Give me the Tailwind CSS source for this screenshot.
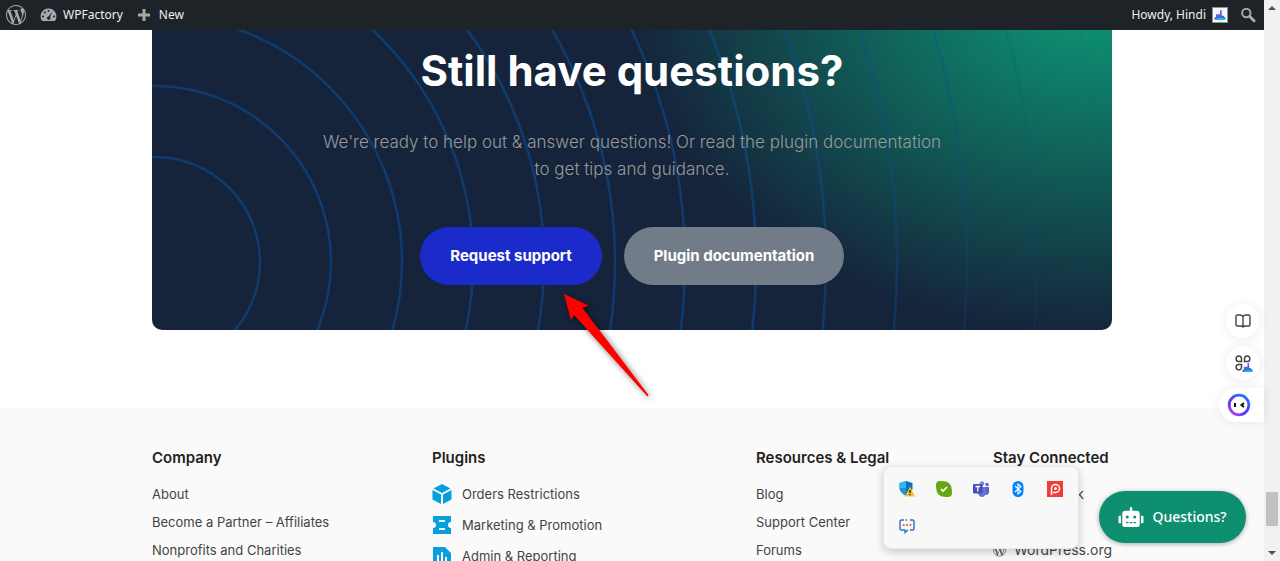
<!DOCTYPE html>
<html lang="en">
<head>
    <meta charset="UTF-8">
    <meta name="viewport" content="width=device-width, initial-scale=1.0">
    <title>WPFactory</title>
    <script src="https://cdn.jsdelivr.net/npm/@tailwindcss/browser@4"></script>
</head>
<body class="relative flex h-screen overflow-hidden bg-white font-['Inter',sans-serif]">
    <!-- Shared symbols -->
    <svg class="hidden">
        <symbol id="wordpress" viewBox="0 0 24 24">
            <path d="M21.469 6.825c.84 1.537 1.318 3.3 1.318 5.175 0 3.979-2.156 7.456-5.363 9.325l3.295-9.527c.615-1.54.82-2.771.82-3.864 0-.405-.026-.78-.07-1.11m-7.981.105c.647-.03 1.232-.105 1.232-.105.582-.075.514-.93-.067-.899 0 0-1.755.135-2.88.135-1.064 0-2.85-.15-2.85-.15-.585-.03-.661.855-.075.885 0 0 .54.061 1.125.09l1.68 4.605-2.37 7.08L5.354 6.9c.649-.03 1.234-.1 1.234-.1.585-.075.516-.93-.065-.896 0 0-1.746.138-2.874.138-.2 0-.438-.008-.69-.015C4.911 3.15 8.235 1.215 12 1.215c2.809 0 5.365 1.072 7.286 2.833-.046-.003-.091-.009-.141-.009-1.06 0-1.812.923-1.812 1.914 0 .89.513 1.643 1.06 2.531.411.72.89 1.643.89 2.977 0 .915-.354 1.994-.821 3.479l-1.075 3.585-3.9-11.61.001.014zM12 22.784c-1.059 0-2.081-.153-3.048-.437l3.237-9.406 3.315 9.087c.024.053.05.101.078.149-1.12.393-2.325.609-3.582.609M1.211 12c0-1.564.336-3.05.935-4.39L7.29 21.709C3.694 19.96 1.212 16.271 1.211 12M12 0C5.385 0 0 5.385 0 12s5.385 12 12 12 12-5.385 12-12S18.615 0 12 0"/>
        </symbol>
        <symbol id="avatar" viewBox="0 0 16 16">
            <path d="M3.500 11V7.500q1-1.500 1.800 0 1-1.500 1.800 0L8 7V3q1-1.500 2 0v5l2 2v2H4Z" fill="#7456dc"/>
            <path d="M1.500 12q1.500-3 4-1.500 4 1 6-2l2.500 2.500q1 1.500-1 2.500H3q-1.500 0-1.500-1.500Z" fill="#2f62d9"/>
            <path d="M2 12.500q5-2 12-1v1.500q-6 2-12-.5Z" fill="#19c0e8"/>
        </symbol>
    </svg>

    <div class="relative flex min-w-0 flex-1 flex-col">
        <!-- Admin bar -->
        <header class="flex h-[30px] shrink-0 items-center justify-between bg-[#1d2327] pr-2 pl-1.5 font-['Noto_Sans','Open_Sans',sans-serif] text-xs text-[#f0f0f1]">
            <nav class="flex items-center gap-[14px]">
                <a href="#" aria-label="WordPress"><svg class="size-5 fill-[#a7aaad]"><use href="#wordpress"/></svg></a>
                <a href="#" class="flex items-center gap-1.5">
                    <svg class="h-4 w-[17px] fill-[#a7aaad]" viewBox="0 0 16 16"><path fill-rule="evenodd" d="M8 1.500a7.900 7.900 0 0 0-6.300 12.600h12.600A7.900 7.900 0 0 0 8 1.500ZM8 3a1 1 0 1 1 0 2 1 1 0 0 1 0-2ZM4.300 4.500a1 1 0 1 1 0 2 1 1 0 0 1 0-2Zm-1.800 4a1 1 0 1 1 0 2 1 1 0 0 1 0-2Zm11 0a1 1 0 1 1 0 2 1 1 0 0 1 0-2ZM11.800 4.500 9.500 10a1.700 1.700 0 1 1-1.500-.6Z"/></svg>
                    WPFactory
                </a>
                <a href="#" class="flex items-center gap-2">
                    <svg class="size-[14px] stroke-[#a7aaad]" viewBox="0 0 14 14" stroke-width="3"><path d="M7 1v12M1 7h12"/></svg>
                    New
                </a>
            </nav>
            <div class="flex items-center gap-3">
                <a href="#" class="flex items-center gap-1.5">Howdy, Hindi
                    <svg class="size-4 border border-[#8c8f94] bg-[#f6f7f7]"><use href="#avatar"/></svg>
                </a>
                <button aria-label="Search"><svg class="size-4 fill-none stroke-[#a7aaad]" viewBox="0 0 16 16"><circle cx="6.300" cy="6" r="4.200" stroke-width="2"/><path d="m9.800 9.500 4.200 4.200" stroke-width="3" stroke-linecap="round"/></svg></button>
            </div>
        </header>

        <main class="mx-auto w-full max-w-[960px]">
            <section class="relative overflow-hidden rounded-b-[10px] bg-[#15243b] bg-[radial-gradient(472px_350px_at_calc(100%-12px)_-45px,#0c9d78,#15243b)] pb-[45px] text-center">
                <!-- Rings -->
                <svg class="absolute inset-0 h-full w-full fill-none stroke-[#0b4c8f]/60" stroke-width="2.500">
                    <defs>
                        <linearGradient id="fade"><stop offset=".65" stop-color="#fff"/><stop offset="1" stop-color="#fff" stop-opacity="0"/></linearGradient>
                        <mask id="ringMask" maskUnits="userSpaceOnUse" x="0" y="0" width="100%" height="100%"><rect width="100%" height="100%" fill="url(#fade)" stroke="none"/></mask>
                    </defs>
                    <g mask="url(#ringMask)">
                        <circle cx="3" cy="232" r="105"/>
                        <circle cx="3" cy="232" r="176"/>
                        <circle cx="3" cy="232" r="247"/>
                        <circle cx="3" cy="232" r="318"/>
                        <circle cx="3" cy="232" r="389"/>
                        <circle cx="3" cy="232" r="460"/>
                        <circle cx="3" cy="232" r="530"/>
                        <circle cx="3" cy="232" r="601"/>
                        <circle cx="3" cy="232" r="671"/>
                        <circle cx="3" cy="232" r="742"/>
                        <circle cx="3" cy="232" r="812"/>
                        <circle cx="3" cy="232" r="882"/>
                        <circle cx="3" cy="232" r="953"/>
                    </g>
                </svg>
                <div class="relative flex flex-col items-center">
                    <h2 class="pt-3 text-[42px] leading-[58px] font-bold text-white">Still have questions?</h2>
                    <p class="mt-[29px] max-w-[660px] text-[17px] leading-[27px] font-light text-[#999]">We're ready to help out &amp; answer questions! Or read the plugin documentation<br>to get tips and guidance.</p>
                    <div class="mt-11 flex gap-[22px] text-[15px] font-bold text-white">
                        <a href="#" class="flex h-[58px] w-[182px] items-center justify-center rounded-full bg-[#1b2bcb]">Request support</a>
                        <a href="#" class="flex h-[58px] w-[220px] items-center justify-center rounded-full bg-[#727c88]">Plugin documentation</a>
                    </div>
                </div>
            </section>
        </main>

        <footer class="mt-[78px] flex-1 bg-[#fafafa] text-[#444]">
            <div class="mx-auto flex max-w-[960px] justify-between pt-10 text-[13px] leading-5 whitespace-nowrap">
                <nav class="w-[176px]">
                    <h3 class="mb-4 text-[15px] font-semibold text-[#222]">Company</h3>
                    <ul class="flex flex-col gap-2">
                        <li><a href="#">About</a></li>
                        <li><a href="#">Become a Partner – Affiliates</a></li>
                        <li><a href="#">Nonprofits and Charities</a></li>
                    </ul>
                </nav>
                <nav class="w-[220px]">
                    <h3 class="mb-4 text-[15px] font-semibold text-[#222]">Plugins</h3>
                    <ul class="flex flex-col gap-[11px]">
                        <li><a href="#" class="flex items-center gap-2.5">
                            <svg class="size-5 fill-[#089fdf]" viewBox="0 0 20 20"><path d="m10 0 8.500 4.500L10 9 1.500 4.500ZM.5 6 9 10.500V20L.5 15.500ZM19.500 6 11 10.500V20l8.500-4.500Z"/></svg>Orders Restrictions</a></li>
                        <li><a href="#" class="flex items-center gap-2.5">
                            <svg class="size-5 fill-[#089fdf]" viewBox="0 0 20 20"><path fill-rule="evenodd" d="M1 1h18v6a3 3 0 0 0 0 6v6H1v-6a3 3 0 0 0 0-6ZM7 5v2h6V5ZM7 13v2h6v-2Z"/></svg>Marketing &amp; Promotion</a></li>
                        <li><a href="#" class="flex items-center gap-2.5">
                            <svg class="size-5 fill-[#089fdf]" viewBox="0 0 20 20"><path fill-rule="evenodd" d="M1 1h12l6 6v12H1ZM5 9v7h2V9ZM9 6v10h2V6ZM13 11v5h2v-5Z"/></svg>Admin &amp; Reporting</a></li>
                    </ul>
                </nav>
                <nav class="w-[133px]">
                    <h3 class="mb-4 text-[15px] font-semibold text-[#222]">Resources &amp; Legal</h3>
                    <ul class="flex flex-col gap-2">
                        <li><a href="#">Blog</a></li>
                        <li><a href="#">Support Center</a></li>
                        <li><a href="#">Forums</a></li>
                    </ul>
                </nav>
                <nav class="w-[119px]">
                    <h3 class="mb-4 text-[15px] font-semibold text-[#222]">Stay Connected</h3>
                    <ul class="flex flex-col gap-2 text-sm leading-5">
                        <li class="pl-[26px]"><a href="#">Facebook</a></li>
                        <li class="pl-[26px]"><a href="#">Twitter</a></li>
                        <li><a href="#" class="flex items-center gap-2"><svg class="size-[14px] fill-[#666]"><use href="#wordpress"/></svg>WordPress.org</a></li>
                    </ul>
                </nav>
            </div>
        </footer>

        <!-- Side tools -->
        <div class="absolute top-[304px] right-0 flex flex-col items-end gap-2">
            <button aria-label="Read" class="mr-1 grid size-[34px] place-items-center rounded-full bg-white shadow-[0_1px_12px_#00000015]">
                <svg class="size-4 fill-none stroke-[#444]" viewBox="0 0 16 16" stroke-width="1.400" stroke-linejoin="round"><path d="M8 3.500Q7 2 5 2H2.500Q1 2 1 3.500v8Q1 13 2.500 13h3Q7 13 8 14q1-1 2.500-1h3q1.500 0 1.500-1.500v-8Q15 2 13.500 2H11Q9 2 8 3.500ZM8 3.500V14"/></svg>
            </button>
            <button aria-label="Apps" class="mr-1 grid size-[34px] place-items-center rounded-full bg-white shadow-[0_1px_12px_#00000015]">
                <svg class="size-5 fill-none stroke-[#444]" viewBox="0 0 20 20" stroke-width="1.500"><path d="M8.500 8.500h-3A2.700 2.700 0 1 1 8.500 5.500ZM11.500 8.500v-3a2.700 2.700 0 1 1 3 3ZM8.500 11.500v3a2.700 2.700 0 1 1-3-3Z"/><use href="#avatar" x="8" y="8" width="13" height="13" stroke="none"/></svg>
            </button>
            <button aria-label="Assistant" class="flex h-[34px] w-[45px] items-center rounded-l-full bg-white pl-2 shadow-[0_1px_12px_#00000015]">
                <svg class="size-6 fill-none" viewBox="0 0 24 24">
                    <defs><linearGradient id="ring" x2=".7" y1="1" y2="0"><stop stop-color="#d64cf0"/><stop offset=".4" stop-color="#5b35f2"/><stop offset="1" stop-color="#2b6cff"/></linearGradient></defs>
                    <circle cx="12" cy="12" r="9.800" stroke="url(#ring)" stroke-width="2.800"/>
                    <path d="M8 10v4M17 10l-2.500 2 2.500 2" stroke="#111" stroke-width="2"/>
                </svg>
            </button>
        </div>

        <!-- Tray popup -->
        <div class="absolute right-[185px] bottom-3 grid h-[83px] w-[196px] grid-cols-5 place-items-center rounded-lg border border-[#e8e8e8] bg-[#f8f8f8] px-1 py-1 shadow-[0_3px_10px_#0003]">
            <svg class="size-4" viewBox="0 0 16 16"><path d="M7 0 .5 2v6q1 4 6.500 7Z" fill="#1994df"/><path d="m7 0 6.500 2v6q-1 4-6.500 7Z" fill="#0b6fc0"/><path d="M.5 7H7V0L.5 2Z" fill="#35b6f2"/><path d="m11 5.500 5 10H6Z" fill="#fbc02d"/><path d="M11 9v3M11 13v1.300" stroke="#222" stroke-width="1.400"/></svg>
            <svg class="size-4" viewBox="0 0 16 16"><path d="M4 0q3 0 4 .3A7.700 7.700 0 0 1 15.700 8q.3 2 .3 4a4 4 0 0 1-4 4q-3 0-4-.3A7.700 7.700 0 0 1 .3 8Q0 7 0 4a4 4 0 0 1 4-4Z" fill="#66a814"/><path d="m5 8 2 2 4-4" fill="none" stroke="#fff" stroke-width="1.700"/></svg>
            <svg class="size-4" viewBox="0 0 16 16"><circle cx="14" cy="3.500" r="1.700" fill="#5b62c8"/><circle cx="9" cy="2.500" r="2.300" fill="#7b83eb"/><path d="M12 6h4v5q0 3-4 3Z" fill="#5b62c8"/><path d="M5 6h8v6q-1 4-4 4t-4-4Z" fill="#6a71d8"/><rect y="3" width="9.500" height="9.500" rx="1" fill="#464eb8"/><path d="M2.500 5.500h4.600M4.800 5.500V10.500" stroke="#fff" stroke-width="1.300"/></svg>
            <svg class="size-4" viewBox="0 0 16 16"><rect x="2.500" width="11" height="16" rx="5.500" fill="#0082fc"/><path d="m5 5 6 5.500L8 13V3l3 2.500L5 11" fill="none" stroke="#fff" stroke-width="1.100"/></svg>
            <svg class="size-4" viewBox="0 0 16 16"><path d="M0 0h16v16H0Z" fill="#ef3e36"/><path d="M4.500 14V7.500a4 4 0 1 1 4 4H6" fill="none" stroke="#fff" stroke-width="1.500"/><circle cx="8.500" cy="7.500" r="1.500" fill="#fff"/></svg>
            <svg class="size-4" viewBox="0 0 16 16"><path d="M5 2H2.500Q1 2 1 3.500v7Q1 12 2.500 12H6v2.500L9 12M11 2h2.500Q15 2 15 3.500v7q0 1.500-1.500 1.500H11M6.500 2H8" fill="none" stroke="#2b70c0" stroke-width="1.400"/><path d="M3.800 7h1.900M7.100 7H9M10.400 7h1.900" stroke="#e0463c" stroke-width="1.700"/></svg>
        </div>

        <!-- Chat button -->
        <button class="absolute right-[18px] bottom-[18px] flex h-[52px] w-[147px] items-center justify-center gap-2 rounded-full bg-[#0e8f6f] font-['Noto_Sans',sans-serif] text-sm font-medium text-white shadow-[0_1px_5px_#0005]">
            <svg class="h-5 w-[26px] fill-white" viewBox="0 0 640 512"><path d="M32 224H64V416H32A32 32 0 0 1 0 384V256A32 32 0 0 1 32 224Zm512-48V448a64 64 0 0 1-64 64H160a64 64 0 0 1-64-64V176a80 80 0 0 1 80-80H288V32a32 32 0 0 1 64 0V96H464A80 80 0 0 1 544 176ZM264 256a40 40 0 1 0-40 40A40 40 0 0 0 264 256Zm-8 128H192v32h64Zm96 0H288v32h64ZM456 256a40 40 0 1 0-40 40A40 40 0 0 0 456 256Zm-8 128H384v32h64ZM640 256V384a32 32 0 0 1-32 32H576V224h32A32 32 0 0 1 640 256Z"/></svg>
            Questions?
        </button>

        <!-- Pointer arrow -->
        <svg class="pointer-events-none absolute top-[290px] left-[560px] h-[110px] w-[94px] fill-[#fe0000] drop-shadow-[2px_2px_3px_#0008]" viewBox="0 0 94 110"><path d="m4 4 24.500 11.500-6 2.500L88.500 105q0 1.500-1.500 1L14 25l-3 5Z"/></svg>
    </div>

    <!-- Scroll bar -->
    <div class="flex w-4 shrink-0 flex-col items-center bg-[#f1f1f1]">
        <svg class="size-4 shrink-0 fill-[#505050]" viewBox="0 0 16 16"><path d="m4 10 4-4 4 4Z"/></svg>
        <div class="mt-auto mb-[19px] h-[34px] w-3 bg-[#c1c1c1]"></div>
        <svg class="size-4 shrink-0 fill-[#505050]" viewBox="0 0 16 16"><path d="m4 6 4 4 4-4Z"/></svg>
    </div>
</body>
</html>
